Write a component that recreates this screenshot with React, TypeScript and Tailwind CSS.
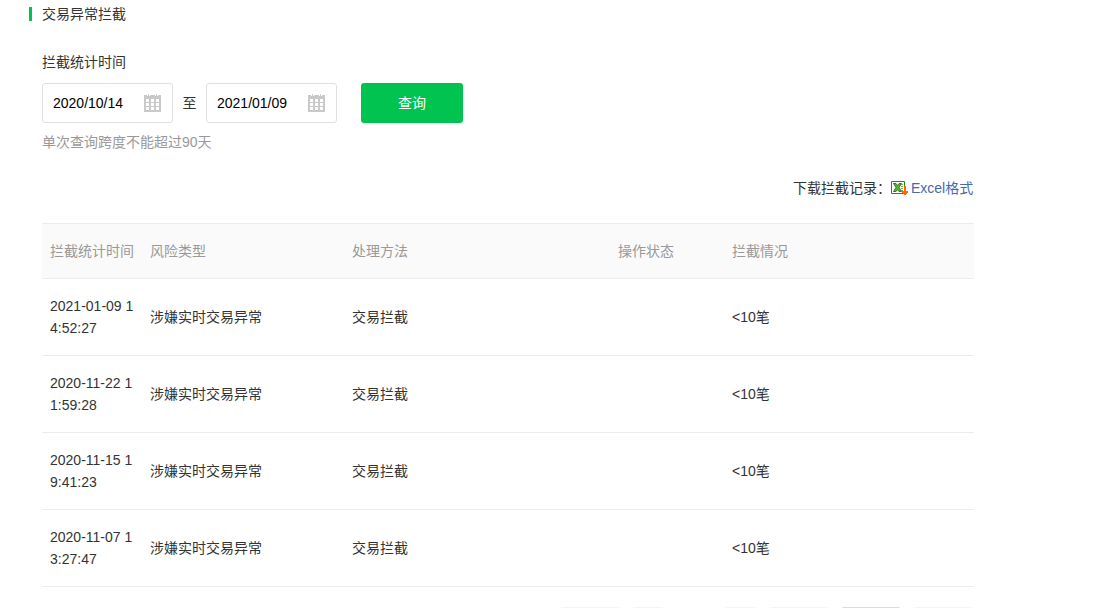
const rows = [
  { time: '2021-01-09 14:52:27', risk: '涉嫌实时交易异常', method: '交易拦截', status: '', result: '<10笔' },
  { time: '2020-11-22 11:59:28', risk: '涉嫌实时交易异常', method: '交易拦截', status: '', result: '<10笔' },
  { time: '2020-11-15 19:41:23', risk: '涉嫌实时交易异常', method: '交易拦截', status: '', result: '<10笔' },
  { time: '2020-11-07 13:27:47', risk: '涉嫌实时交易异常', method: '交易拦截', status: '', result: '<10笔' },
];

const columns = 'grid grid-cols-[100px_202px_266px_114px_1fr] px-2 items-center';

function CalendarIcon() {
  return (
    <svg width="17" height="18" viewBox="0 0 17 18" shapeRendering="crispEdges" className="shrink-0">
      <path
        fill="#c9c9c9"
        fillRule="evenodd"
        d="M0 1H3V2H6V1H11V2H14V1H17V18H0ZM2 5V8H5V5ZM7 5V8H10V5ZM12 5V8H15V5ZM2 9V12H5V9ZM7 9V12H10V9ZM12 9V12H15V9ZM2 13V16H5V13ZM7 13V16H10V13ZM12 13V16H15V13Z"
      />
      <path fill="#c9c9c9" d="M4 0H5V2H4ZM12 0H13V2H12Z" />
    </svg>
  );
}

function ExcelIcon() {
  return (
    <svg width="17" height="14" viewBox="0 0 17 14" className="shrink-0">
      <path d="M.5.5H13.5V12.5H.5Z" fill="#fff" stroke="#2b8a12" />
      <path d="M9 3.5H12M10 5.5H12M10 7.5H12M9 9.5H12" stroke="#7dbb62" />
      <path d="M2.5 2.5H5L6.5 4.5L8 2.5H10.5L8 6.5L10.5 10.5H8L6.5 8.5L5 10.5H2.5L5 6.5Z" fill="#5fae40" stroke="#1f7a0a" strokeWidth=".9" />
      <path d="M12 5H17V14H12Z" fill="#fff" />
      <path d="M13 5H15V10H17V12H16V13H15V14H13V13H12V12H11V10H13Z" fill="#ff6a00" shapeRendering="crispEdges" />
    </svg>
  );
}

function DateInput({ value }: { value: string }) {
  return (
    <div className="flex h-10 w-[131px] items-center justify-between rounded-[3px] border border-[#e0e0e0] pr-[11px] pl-2.5 text-black">
      <span>{value}</span>
      <CalendarIcon />
    </div>
  );
}

export default function App() {
  return (
    <main className="h-[608px] overflow-hidden bg-white pl-[29px] font-['Liberation_Sans','Noto_Sans_CJK_SC',sans-serif] text-sm leading-[22px] text-[#333]">
      <div className="flex h-7 items-center">
        <span className="mr-2.5 h-3.5 w-[3px] bg-[#00c250]" />
        <h1>交易异常拦截</h1>
      </div>

      <div className="ml-[13px] w-[932px]">
        {/* 查询条件 */}
        <div className="mt-[23px]">拦截统计时间</div>
        <div className="mt-2.5 flex items-center">
          <DateInput value="2020/10/14" />
          <span className="w-[33px] text-center">至</span>
          <DateInput value="2021/01/09" />
          <button className="ml-6 h-10 w-[102px] rounded-[3px] bg-[#00c350] text-white">查询</button>
        </div>
        <p className="mt-2 text-[#999]">单次查询跨度不能超过90天</p>

        <div className="mt-6 flex items-center justify-end pr-[0.8px]">
          <span>下载拦截记录：</span>
          <ExcelIcon />
          <a className="ml-[3px] text-[#446ab0]">Excel格式</a>
        </div>

        {/* 拦截记录 */}
        <div className="mt-6">
          <div className={`${columns} h-14 border-y border-[#ececec] bg-[#fafafa] text-[#999]`}>
            <span>拦截统计时间</span>
            <span>风险类型</span>
            <span>处理方法</span>
            <span>操作状态</span>
            <span>拦截情况</span>
          </div>
          {rows.map((r) => (
            <div key={r.time} className={`${columns} h-[77px] border-b border-[#ececec]`}>
              <span className="w-[84px] break-all">{r.time}</span>
              <span>{r.risk}</span>
              <span>{r.method}</span>
              <span>{r.status}</span>
              <span>{r.result}</span>
            </div>
          ))}
        </div>

        {/* 分页 */}
        <div className="mt-5 flex h-8 justify-end pr-0.5">
          <span className="mr-[13px] w-[59px] rounded-[1px] border border-[#f3f5f7]" />
          <span className="mr-[62px] w-[30px] rounded-[1px] border border-[#f3f5f7]" />
          <span className="mr-3.5 w-[31px] rounded-[1px] border border-[#f3f5f7]" />
          <span className="mr-3.5 w-[58px] rounded-[1px] border border-[#f3f5f7]" />
          <span className="mr-3.5 w-[58px] rounded-[1px] border border-[#dcdcdc]" />
          <span className="w-[58px] rounded-[1px] border border-[#f3f5f7]" />
        </div>
      </div>
    </main>
  );
}
